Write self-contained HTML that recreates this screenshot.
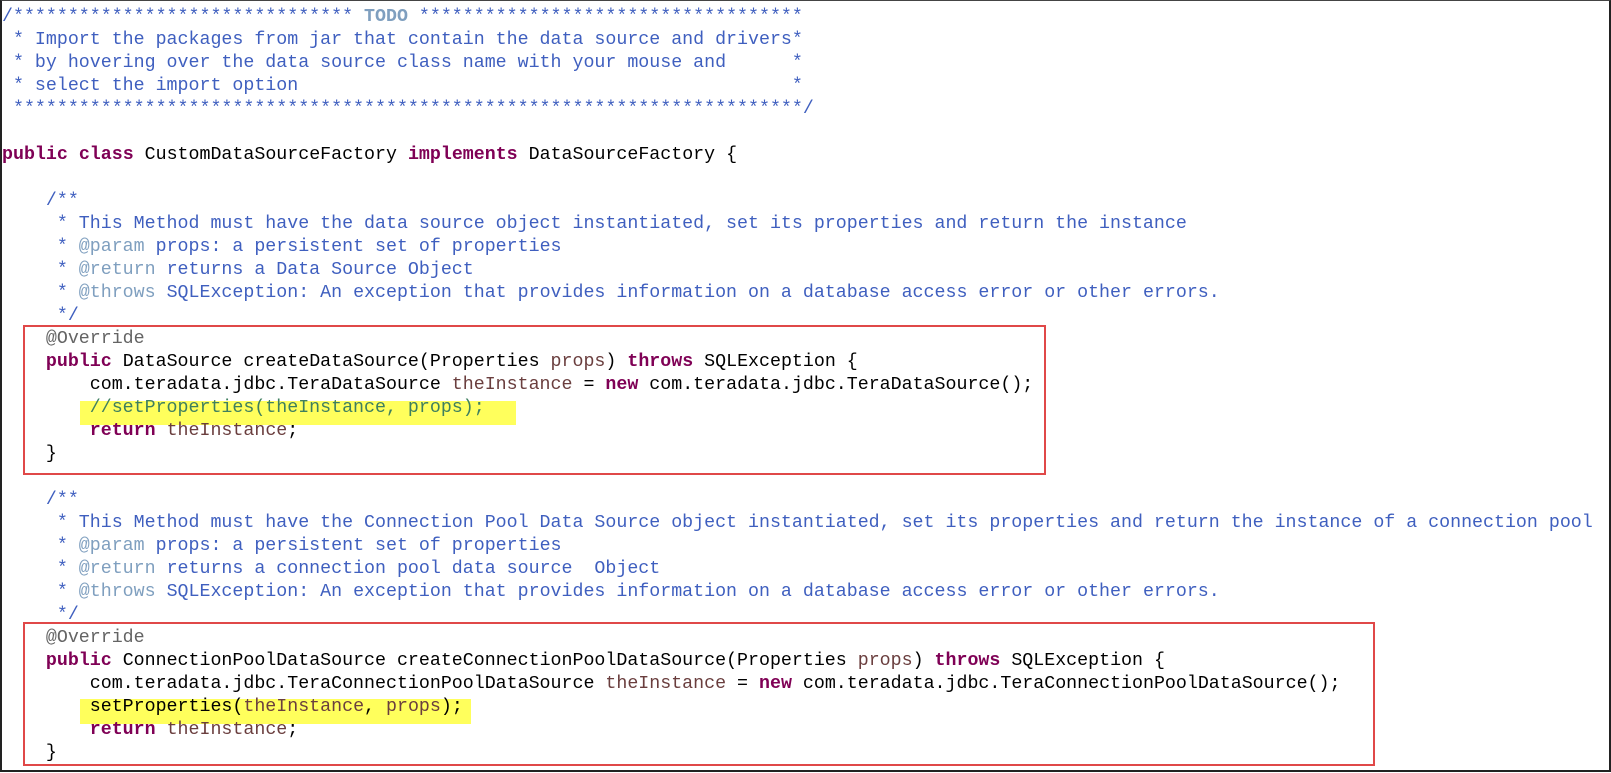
<!DOCTYPE html>
<html><head><meta charset="utf-8"><style>
html,body{margin:0;padding:0;background:#fff;}
body{width:1611px;height:773px;position:relative;overflow:hidden;}
#frame{position:absolute;left:0;top:0;width:1607px;height:769px;border:2px solid #222;border-top:1px solid #444;}
pre{position:absolute;left:2px;top:6px;margin:0;font-family:"Liberation Mono",monospace;font-size:18.3px;line-height:23px;color:#000;white-space:pre;}
.c{color:#3f5fbf}.t{color:#7f9fbf;font-weight:bold}.k{color:#7f0055;font-weight:bold}.a{color:#646464}.g{color:#3f7f5f}.v{color:#6a3e3e}
.hl{position:absolute;background:#ffff5c;}
.box{position:absolute;border:2.5px solid #e04848;}
</style></head><body>
<div id="frame"></div>
<div class="hl" style="left:80px;top:401px;width:436px;height:24px"></div>
<div class="hl" style="left:80px;top:699px;width:391px;height:25px"></div>
<div class="box" style="left:23px;top:325px;width:1019px;height:146px"></div>
<div class="box" style="left:23px;top:622px;width:1348px;height:140px"></div>
<pre><span class="c">/******************************* <span class="t">TODO</span> ***********************************
 * Import the packages from jar that contain the data source and drivers*
 * by hovering over the data source class name with your mouse and      *
 * select the import option                                             *
 ************************************************************************/</span>

<span class="k">public</span> <span class="k">class</span> CustomDataSourceFactory <span class="k">implements</span> DataSourceFactory {

    <span class="c">/**
     * This Method must have the data source object instantiated, set its properties and return the instance
     * <span class="t" style="font-weight:normal">@param</span> props: a persistent set of properties
     * <span class="t" style="font-weight:normal">@return</span> returns a Data Source Object
     * <span class="t" style="font-weight:normal">@throws</span> SQLException: An exception that provides information on a database access error or other errors.
     */</span>
    <span class="a">@Override</span>
    <span class="k">public</span> DataSource createDataSource(Properties <span class="v">props</span>) <span class="k">throws</span> SQLException {
        com.teradata.jdbc.TeraDataSource <span class="v">theInstance</span> = <span class="k">new</span> com.teradata.jdbc.TeraDataSource();
        <span class="g">//setProperties(theInstance, props);</span>
        <span class="k">return</span> <span class="v">theInstance</span>;
    }

    <span class="c">/**
     * This Method must have the Connection Pool Data Source object instantiated, set its properties and return the instance of a connection pool
     * <span class="t" style="font-weight:normal">@param</span> props: a persistent set of properties
     * <span class="t" style="font-weight:normal">@return</span> returns a connection pool data source  Object
     * <span class="t" style="font-weight:normal">@throws</span> SQLException: An exception that provides information on a database access error or other errors.
     */</span>
    <span class="a">@Override</span>
    <span class="k">public</span> ConnectionPoolDataSource createConnectionPoolDataSource(Properties <span class="v">props</span>) <span class="k">throws</span> SQLException {
        com.teradata.jdbc.TeraConnectionPoolDataSource <span class="v">theInstance</span> = <span class="k">new</span> com.teradata.jdbc.TeraConnectionPoolDataSource();
        setProperties(<span class="v">theInstance</span>, <span class="v">props</span>);
        <span class="k">return</span> <span class="v">theInstance</span>;
    }</pre>
</body></html>
